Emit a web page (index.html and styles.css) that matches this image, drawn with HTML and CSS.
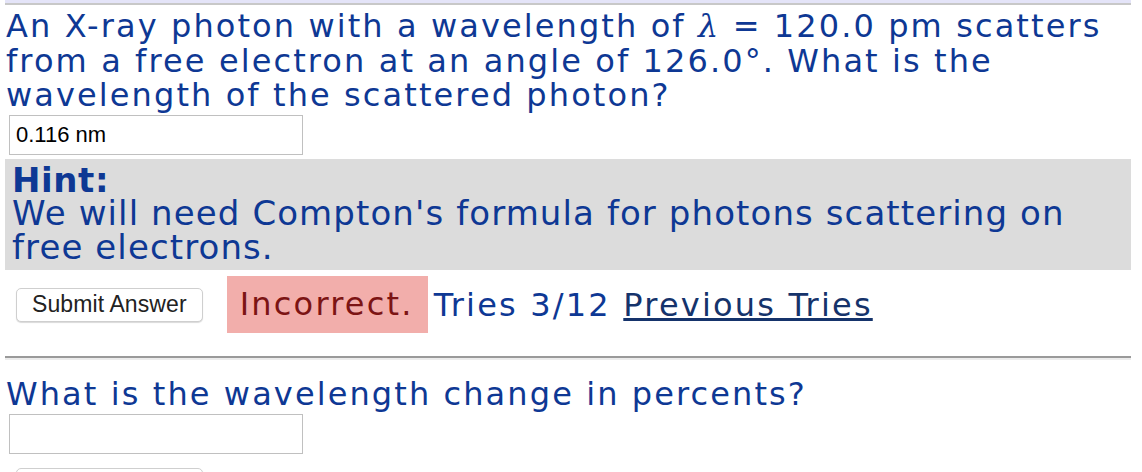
FILE: index.html
```html
<!DOCTYPE html>
<html lang="en">
<head>
    <meta charset="UTF-8">
    <meta name="viewport" content="width=device-width, initial-scale=1.0">
    <title>Compton Scattering - Problem</title>
    <link rel="stylesheet" href="styles.css">
</head>
<body>
    <div class="page">
        <div class="topbar"></div>

        <div class="problem">
            <p class="question">An X-ray photon with a wavelength of <span class="math">λ</span> = 120.0 pm scatters from a free electron at an angle of 126.0°. What is the wavelength of the scattered photon?</p>
            <input class="answer" type="text" value="0.116 nm">
            <div class="hint">
                <strong>Hint:</strong><br>
                We will need Compton's formula for photons scattering on free electrons.
            </div>
            <div class="submit-row">
                <button type="button">Submit Answer</button>
                <span class="incorrect">Incorrect.</span>
                <span class="tries">Tries 3/12 <a href="#">Previous Tries</a></span>
            </div>
        </div>

        <hr class="divider">

        <div class="problem">
            <p class="question">What is the wavelength change in percents?</p>
            <input class="answer" type="text" value="">
            <div class="submit-row">
                <button type="button">Submit Answer</button>
            </div>
        </div>
    </div>
</body>
</html>
```

FILE: styles.css
```css
body {
    margin: 0;
    background: #ffffff;
    font-family: "DejaVu Sans", Verdana, sans-serif;
    color: #0e3894;
}
.page {
    width: 1126px;
    margin-left: 5px;
}
.topbar {
    height: 3px;
    background: #e4e4f8;
    border-bottom: 2px solid #c8c8c8;
}
.problem {
    padding-left: 1px;
}
.question {
    margin: 4px 0 0;
    font-size: 32px;
    line-height: 34.5px;
    letter-spacing: 2.1px;
}
.math {
    font-family: "DejaVu Serif", serif;
    font-style: italic;
}
.answer {
    display: block;
    box-sizing: border-box;
    width: 294px;
    height: 40px;
    margin: 2px 0 0 3px;
    padding: 0 6px;
    border: 1px solid #c0c0c0;
    font-family: "Liberation Sans", Arial, sans-serif;
    font-size: 22px;
    color: #000;
}
.hint {
    margin: 4px 0 0 -1px;
    padding: 5px 7px 6px;
    background: #dcdcdc;
    font-size: 34px;
    line-height: 33.5px;
    letter-spacing: 1.1px;
}
.hint strong {
    letter-spacing: 0.6px;
}
.submit-row {
    display: flex;
    align-items: center;
    margin-top: 6px;
    font-size: 32px;
    letter-spacing: 2.2px;
}
.submit-row button {
    height: 34px;
    margin-left: 10px;
    padding: 0 15px;
    background: #fff;
    border: 1px solid #cfcfcf;
    border-radius: 5px;
    box-shadow: 0 1px 1px rgba(0, 0, 0, 0.15);
    font-family: "Liberation Sans", Arial, sans-serif;
    font-size: 23px;
    letter-spacing: 0.1px;
    color: #222;
}
.incorrect {
    margin-left: 24px;
    padding: 10px 14px 10px 13px;
    background: #f2aeab;
    color: #7c1414;
    line-height: 37px;
}
.tries {
    margin-left: 6px;
}
.tries a {
    color: #15336b;
}
.divider {
    margin: 23px 0 0;
    height: 0;
    border: none;
    border-top: 2px solid #9a9a9a;
    border-bottom: 2px solid #ececec;
}
.divider + .problem .question {
    margin-top: 17px;
}
.divider + .problem .submit-row {
    margin-top: 14px;
}
```
